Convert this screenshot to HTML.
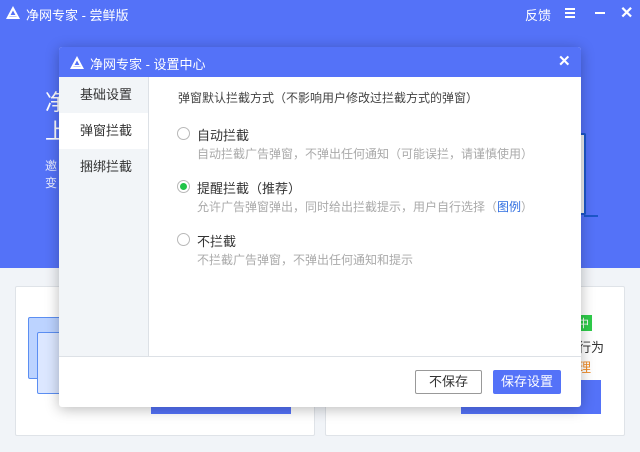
<!DOCTYPE html>
<html><head><meta charset="utf-8"><style>
*{margin:0;padding:0;box-sizing:border-box}
body{width:640px;height:452px;overflow:hidden;position:relative;background:#f1f4f8;font-family:"Liberation Sans","Noto Sans CJK SC",sans-serif;font-size:12px}
.top{position:absolute;left:0;top:0;width:640px;height:268px;background:#5472f8}
.ab{position:absolute;white-space:nowrap}
.card{position:absolute;background:#fff;border:1px solid #dfe3e8;border-radius:2px}
.dlg{position:absolute;left:59px;top:47px;width:522px;height:360px;background:#fff;border-radius:3px;box-shadow:0 2px 14px rgba(0,0,0,.28);overflow:hidden}
.dh{height:30px;background:#5472f8;color:#fff;font-size:13px}
.side{position:absolute;left:0;top:30px;width:90px;height:280px;background:#f2f5f8;border-right:1px solid #dde1e6}
.side div{height:36px;line-height:36px;padding-left:21px;font-size:13px;color:#333}
.radio{position:absolute;width:13px;height:13px;border:1px solid #b8b8b8;border-radius:50%;background:#fff}
.t{font-size:13px;color:#333}
.d{font-size:12px;color:#aaa}
</style></head><body>
<div class="top"></div>
<svg class="ab" style="left:5px;top:5px" width="16" height="15" viewBox="0 0 16 15"><path d="M8 1 L15 14 H1 Z M8 5.5 L4.5 12 H11.5 Z" fill="#fff" fill-rule="evenodd"/><rect x="5" y="10" width="6" height="1.6" fill="#fff"/></svg>
<div class="ab" style="left:26px;top:5px;color:#fff;font-size:13px">净网专家 - 尝鲜版</div>
<div class="ab" style="left:525px;top:5px;color:#fff;font-size:13px">反馈</div>
<div class="ab" style="left:565px;top:8px;width:10px;height:2px;background:#fff;box-shadow:0 4px 0 #fff,0 8px 0 #fff"></div>
<div class="ab" style="left:595px;top:12px;width:10px;height:2px;background:#fff"></div>
<div class="ab" style="left:620px;top:3px;color:#fff;font-size:16px;font-weight:bold">✕</div>
<div class="ab" style="left:45px;top:85px;color:#fff;font-size:22px">净</div>
<div class="ab" style="left:45px;top:114px;color:#fff;font-size:22px">上</div>
<div class="ab" style="left:45px;top:158px;color:#e8ecff;font-size:12px;line-height:17px">邀<br>变</div>
<div class="ab" style="left:540px;top:133px;width:46px;height:82px;border:2px solid #1c56c9;border-left:none;border-radius:0 2px 2px 0;background:#eee"></div>
<div class="ab" style="left:584px;top:215px;width:14px;height:2px;background:#1c56c9"></div>
<div class="card" style="left:15px;top:286px;width:300px;height:150px"></div>
<div class="card" style="left:325px;top:286px;width:300px;height:150px"></div>
<div class="ab" style="left:28px;top:317px;width:45px;height:62px;background:#bcd3ff;border:1px solid #5b8ef2;border-radius:2px"></div>
<div class="ab" style="left:37px;top:332px;width:45px;height:62px;background:#dce7ff;border:1px solid #5b8ef2;border-radius:2px"></div>
<div class="ab" style="left:151px;top:395px;width:140px;height:19px;background:#5472f8"></div>
<div class="ab" style="left:461px;top:380px;width:140px;height:34px;background:#5472f8"></div>
<div class="ab" style="left:578px;top:315px;width:14px;height:16px;background:#2ecc4a;color:#fff;font-size:11px">中</div>
<div class="ab" style="left:578px;top:337px;color:#333;font-size:13px">行为</div>
<div class="ab" style="left:578px;top:357px;color:#f08a24;font-size:13px">理</div>
<div class="dlg">
 <div class="dh">
  <svg class="ab" style="left:10px;top:8px" width="16" height="15" viewBox="0 0 16 15"><path d="M8 1 L15 14 H1 Z M8 5.5 L4.5 12 H11.5 Z" fill="#fff" fill-rule="evenodd"/><rect x="5" y="10" width="6" height="1.6" fill="#fff"/></svg>
  <div class="ab" style="left:31px;top:7px">净网专家 - 设置中心</div>
  <div class="ab" style="left:499px;top:5px;font-size:15px;font-weight:bold">✕</div>
 </div>
 <div class="side"><div>基础设置</div><div style="background:#fff">弹窗拦截</div><div>捆绑拦截</div></div>
 <div class="ab" style="left:119px;top:42px;font-size:12px;color:#444">弹窗默认拦截方式（不影响用户修改过拦截方式的弹窗）</div>
 <div class="radio" style="left:118px;top:80px"></div>
 <div class="ab t" style="left:138px;top:78px">自动拦截</div>
 <div class="ab d" style="left:138px;top:98px">自动拦截广告弹窗，不弹出任何通知（可能误拦，请谨慎使用）</div>
 <div class="radio" style="left:118px;top:133px"><div style="position:absolute;left:2px;top:2px;width:7px;height:7px;border-radius:50%;background:#21c449"></div></div>
 <div class="ab t" style="left:138px;top:131px">提醒拦截（推荐）</div>
 <div class="ab d" style="left:138px;top:151px">允许广告弹窗弹出，同时给出拦截提示，用户自行选择（<span style="color:#2f6ee0">图例</span>）</div>
 <div class="radio" style="left:118px;top:186px"></div>
 <div class="ab t" style="left:138px;top:184px">不拦截</div>
 <div class="ab d" style="left:138px;top:204px">不拦截广告弹窗，不弹出任何通知和提示</div>
 <div class="ab" style="left:0;top:309px;width:522px;height:1px;background:#dde1e6"></div>
 <div class="ab" style="left:356px;top:323px;width:67px;height:24px;border:1px solid #999;border-radius:2px;text-align:center;line-height:22px;font-size:13px;color:#333">不保存</div>
 <div class="ab" style="left:434px;top:323px;width:68px;height:24px;background:#5472f8;border-radius:2px;text-align:center;line-height:24px;font-size:13px;color:#fff">保存设置</div>
</div>
</body></html>
